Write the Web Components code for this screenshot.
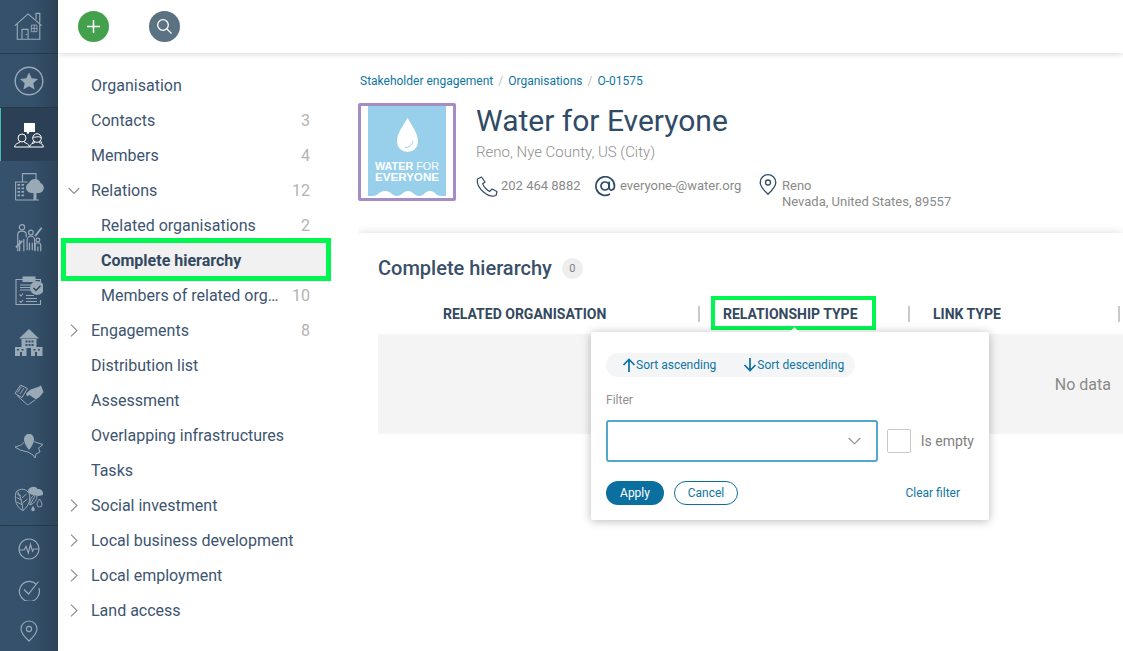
<!DOCTYPE html>
<html lang="en">
<head>
<meta charset="utf-8">
<title>Water for Everyone</title>
<style>
  html, body { margin: 0; height: 100%; overflow: hidden; background: #fff; }
  body { font-family: Roboto, "Liberation Sans", sans-serif; color: #3a5068; }
</style>
</head>
<body>

<app-shell>
  <side-rail slot="rail"></side-rail>
  <top-bar slot="top"></top-bar>
  <sub-nav slot="nav">
    <nav-item>Organisation</nav-item>
    <nav-item count="3">Contacts</nav-item>
    <nav-item count="4">Members</nav-item>
    <nav-item count="12" toggle="open">Relations</nav-item>
    <nav-item count="2" level="1">Related organisations</nav-item>
    <nav-item level="1" active>Complete hierarchy</nav-item>
    <nav-item count="10" level="1">Members of related org…</nav-item>
    <nav-item count="8" toggle="closed">Engagements</nav-item>
    <nav-item>Distribution list</nav-item>
    <nav-item>Assessment</nav-item>
    <nav-item>Overlapping infrastructures</nav-item>
    <nav-item>Tasks</nav-item>
    <nav-item toggle="closed">Social investment</nav-item>
    <nav-item toggle="closed">Local business development</nav-item>
    <nav-item toggle="closed">Local employment</nav-item>
    <nav-item toggle="closed">Land access</nav-item>
  </sub-nav>
  <div slot="main">
    <bread-crumbs></bread-crumbs>
    <org-header></org-header>
    <data-card heading="Complete hierarchy" total="0">
      <col-head width="322" pad="65">RELATED ORGANISATION</col-head>
      <col-head width="210" pad="23" marked>RELATIONSHIP TYPE</col-head>
      <col-head width="210" pad="23">LINK TYPE</col-head>
      <filter-pop slot="popup"></filter-pop>
    </data-card>
  </div>
</app-shell>

<script>
// Small helper so every element gets an open shadow root with its own styles
class BaseElement extends HTMLElement {
  constructor() {
    super();
    this._shadowRoot = this.attachShadow({ mode: 'open' });
  }
  connectedCallback() {
    this._shadowRoot.innerHTML = this._render();
  }
}

/* Page frame: rail on the left, bar on top, sub navigation and content below */
class AppShell extends BaseElement {
  _render() {
    return `
      <style>
        :host { display: grid; grid-template-columns: 58px 1fr; height: 651px; overflow: hidden; }
        .right { display: flex; flex-direction: column; min-width: 0; height: 651px; }
        .below { display: flex; flex: 1; min-height: 0; }
        .main { flex: 1; min-width: 0; overflow: hidden; }
      </style>
      <slot name="rail"></slot>
      <div class="right">
        <slot name="top"></slot>
        <div class="below">
          <slot name="nav"></slot>
          <div class="main"><slot name="main"></slot></div>
        </div>
      </div>`;
  }
}
customElements.define('app-shell', AppShell);

/* Dark icon rail */
const RAIL_ICONS = {
  home: `<svg width="30" height="30" viewBox="0 0 32 32"><path d="M1 14.500 15 2 29.500 14.500M3.500 12.500V29H27.500V12.500M23.500 8V1.500H27.500V12M8.500 29V18.500H15V29" fill="none" stroke="currentColor" stroke-width="1.200"/><path d="M18.500 14H24.500V21H18.500ZM18.500 17.500H24.500M21.500 14V21" fill="none" stroke="currentColor" stroke-width="1"/><circle cx="13" cy="24" r=".8" fill="currentColor"/></svg>`,
  star: `<svg width="30" height="30" viewBox="0 0 30 30"><circle cx="15" cy="15" r="13.800" fill="none" stroke="currentColor" stroke-width="1.400"/><path d="M15 6.500 17.700 12.300 24 13 19.300 17.300 20.600 23.500 15 20.300 9.400 23.500 10.700 17.300 6 13 12.300 12.300Z" fill="currentColor"/></svg>`,
  people: `<svg width="30" height="26" viewBox="0 0 30 26"><path d="M10 1H21V10H15.500L14 12.500 12.500 10H10Z" fill="#fff"/><g fill="none" stroke="#fff" stroke-width="1"><circle cx="8" cy="16" r="4"/><path d="M.5 25C1 22 3.500 21.500 6 20M10 20C12.500 21.500 15 22 15.500 25H.5"/><circle cx="23" cy="16" r="4.300"/><path d="M19 15C21 16 24 13.500 27 15.500M15.500 25C16 22 18.500 21.500 21 20.500M25 20.500C27 21.500 29 22 29.500 25H15.500M19.500 19 18.500 21M26.500 19 28 21"/></g></svg>`,
  org: `<svg width="29" height="28" viewBox="0 0 29 28"><g fill="none" stroke="currentColor" stroke-width="1.100"><path d="M.6 27V9H12.500M.6 27H24"/><path d="M7.500 9V.6H21V7"/></g><path d="M2.500 11h2.600v1.700h-2.600zM6.500 11h2.600v1.700h-2.600zM2.500 14.500h2.600v1.700h-2.600zM6.500 14.500h2.600v1.700h-2.600zM2.500 18h2.600v1.700h-2.600zM6.500 18h2.600v1.700h-2.600zM2.500 21.500h2.600v1.700h-2.600zM6.500 21.500h2.600v1.700h-2.600z" fill="currentColor"/><path d="M20 6C23 6 25 8 25.500 10 28 11 29.500 14 28.500 16.500 27.500 19.500 24.500 20.500 21.500 20V27H18.500V20C15 20.500 12 19 11.200 16 10.500 13 12 11 14 10 14.500 8 17 6 20 6Z" fill="currentColor"/></svg>`,
  family: `<svg width="30" height="30" viewBox="0 0 30 32"><g fill="none" stroke="currentColor" stroke-width="1.300"><circle cx="7.500" cy="3.500" r="2.800"/><path d="M3 29V11C3 8.500 5 7.500 7.500 7.500S12 8.500 12 11V14M5 29V17M9.500 16V29"/><circle cx="17" cy="9" r="2.500"/><path d="M13 28V17C13 14.500 15 13 17 13S21 14.500 21 17V28M15.500 20V28M18.500 20V28"/><circle cx="24.500" cy="17" r="2"/><path d="M21.500 29V23C21.500 21 23 20 24.500 20S27.500 21 27.500 23V29M24.500 24V29"/><path d="M1 25 8 18M21.500 13 28.500 4" stroke-width="2"/></g></svg>`,
  tasks: `<svg width="28" height="30" viewBox="0 0 28 30"><g fill="none" stroke="currentColor" stroke-width="1.100"><path d="M20 3.500H25.500V12M25.500 24V28.500H1V3.500H8"/><rect x="8" y="1" width="12" height="4.500" fill="currentColor"/><path d="M5 9H19M5 11.500H18M5 14H17" stroke-width="1.200"/><path d="M4.500 18.500 6 20 8 17.500M4.500 25 6 26.500 8 24M11 19.500H19M11 22.500H22M11 25.500H22"/></g><circle cx="22" cy="12" r="7" fill="currentColor"/><path d="M18.500 12 21 14.500 25.500 9.800" fill="none" stroke="#33495f" stroke-width="1.500"/></svg>`,
  campus: `<svg width="30" height="30" viewBox="0 0 30 30"><path d="M15 1 25 10.500H5Z" fill="currentColor"/><path d="M7.500 11H22.500V20H7.500Z" fill="currentColor"/><path d="M11.500 12.500h2v2h-2zM14.500 12.500h2v2h-2zM17.500 12.500h2v2h-2zM11.500 16h2v2h-2zM14.500 16h2v2h-2zM17.500 16h2v2h-2z" fill="#35506a"/><path d="M1 19H12.500V28H8V24H6V28H1ZM17 19H28.500V28H23V24H21V28H17Z" fill="currentColor"/><path d="M3 21h2v1.500h-2zM7.500 21h2v1.500h-2zM19.500 21h2v1.500h-2zM24 21h2v1.500h-2z" fill="#35506a"/></svg>`,
  shake: `<svg width="30" height="22" viewBox="0 0 30 22"><g fill="none" stroke="currentColor" stroke-width="1"><path d="M1 9.500 6.500 1 13.500 4.500 8 13.500Z"/><path d="M3.500 8.500 7.500 2.500M6 10 10 4"/><path d="M3 11.500 12.500 20C14 21 15.500 20.500 16 19.500L21 16"/></g><path d="M12 9.500 16.500 5.500 24 3 27 1.500 29.500 8 26 12.500 22 15.500 15.500 11 13 12.500Z" fill="currentColor"/></svg>`,
  map: `<svg width="30" height="30" viewBox="0 0 30 30"><path d="M9 10C10.500 12 6 13.500 1 15L6 18 14 20 19 23 21 26 22 22 26 20 24.500 16 29 12.500 24 11 20 9.500" fill="none" stroke="currentColor" stroke-width="1"/><path d="M15 18C12 14 10 11 10 7.500 10 4 12.200 2 15 2S20 4 20 7.500C20 11 18 14 15 18Z" fill="currentColor"/></svg>`,
  nature: `<svg width="30" height="30" viewBox="0 0 30 30"><path d="M14 6C17 1.500 22 2 23.500 5 27 4.500 29.500 7 29 10.500 27 12.500 22 12 19 11 16 10.500 14 9 14 6Z" fill="currentColor"/><g fill="none" stroke="currentColor" stroke-width="1"><path d="M9 26.500C3 24 0 17 2 8 7 3 13 5.500 15 9.500 17 15.500 14.500 22.500 9 26.500ZM9 26.500C8 19 7 13 3.500 7.500M8.500 21 3 18M8 16.500 2.500 13.500M7 12 3 10M8.500 19 13.500 15M8 14 12.500 10"/><path d="M16 21C15.500 16 17.500 11.500 22.500 10 24 14 21.500 19 16 21ZM16 21 21 12"/></g><path d="M25.500 15C27 17.500 28 19 28 20.500A2.500 2.500 0 0 1 23 20.500C23 19 24 17.500 25.500 15Z" fill="none" stroke="currentColor" stroke-width="1"/><path d="M19 22C20 23.500 20.800 24.500 20.800 25.500A1.800 1.800 0 0 1 17.200 25.500C17.200 24.500 18 23.500 19 22Z" fill="currentColor"/></svg>`,
  pulse: `<svg width="22" height="22" viewBox="0 0 22 22"><circle cx="11" cy="11" r="10" fill="none" stroke="currentColor" stroke-width="1.200"/><path d="M1.500 12H6L8 8.500 10.300 15 12.500 6.500 14.500 13 15.800 11H20.500" fill="none" stroke="currentColor" stroke-width="1.200"/></svg>`,
  check: `<svg width="22" height="22" viewBox="0 0 22 22"><path d="M18.300 5.200A10 10 0 1 0 20.800 9" fill="none" stroke="currentColor" stroke-width="1.200"/><path d="M6 10.500 10.500 15 20.500 2.500" fill="none" stroke="currentColor" stroke-width="1.200"/></svg>`,
  pin: `<svg width="18" height="22" viewBox="0 0 18 22"><path d="M9 21C4 16.500 1 13 1 9A8 8 0 0 1 17 9C17 13 14 16.500 9 21Z" fill="none" stroke="currentColor" stroke-width="1.100"/><circle cx="9" cy="9" r="2.600" fill="none" stroke="currentColor" stroke-width="1.100"/></svg>`
};

class SideRail extends BaseElement {
  _render() {
    const item = (name, cls) => `<div class="item ${cls || ''}">${RAIL_ICONS[name]}</div>`;
    return `
      <style>
        :host {
          display: flex; flex-direction: column; width: 58px; height: 651px; overflow: hidden;
          background: linear-gradient(90deg, #36516b 0%, #34506a 55%, #2d4459 100%);
          color: #9aa9b6;
        }
        .item { height: 52px; flex: none; display: flex; align-items: center; justify-content: center; }
        .item svg { display: block; }
        .top { height: 53px; border-bottom: 1px solid #26394b; box-sizing: content-box; }
        .active { height: 53px; background: #2b4055; box-shadow: inset 1px 0 0 #3ec0b4; color: #fff; }
        .low { height: 41px; }
        .sep { height: 1px; flex: none; background: #26394b; margin-bottom: 2px; }
      </style>
      ${item('home', 'top')}
      ${item('star', 'top')}
      ${item('people', 'active')}
      ${item('org')}
      ${item('family')}
      ${item('tasks')}
      ${item('campus')}
      ${item('shake')}
      ${item('map')}
      ${item('nature')}
      <div class="sep"></div>
      ${item('pulse', 'low')}
      ${item('check', 'low')}
      ${item('pin', 'low')}`;
  }
}
customElements.define('side-rail', SideRail);

/* White bar on top with the two round actions */
class TopBar extends BaseElement {
  _render() {
    return `
      <style>
        :host {
          display: flex; align-items: center; gap: 40px; flex: none; height: 53px;
          padding-left: 20px; box-sizing: border-box; background: #fff;
          box-shadow: 0 1px 6px rgba(0,0,0,.16); position: relative; z-index: 2;
        }
        .round { width: 31px; height: 31px; border-radius: 50%; display: flex; align-items: center; justify-content: center; }
        .add { background: #43a14b; }
        .find { background: #5a7282; }
      </style>
      <div class="round add"><svg width="15" height="15" viewBox="0 0 15 15"><path d="M7.500 1V14M1 7.500H14" stroke="#fff" stroke-width="1.500"/></svg></div>
      <div class="round find"><svg width="17" height="17" viewBox="0 0 17 17"><circle cx="7" cy="7" r="5.300" fill="none" stroke="#fff" stroke-width="1.300"/><path d="M11 11 15.500 15.500" stroke="#fff" stroke-width="1.300"/></svg></div>`;
  }
}
customElements.define('top-bar', TopBar);

/* Second level navigation */
class SubNav extends BaseElement {
  _render() {
    return `
      <style>
        :host { display: block; flex: none; width: 300px; padding-top: 15px; box-sizing: border-box; }
      </style>
      <slot></slot>`;
  }
}
customElements.define('sub-nav', SubNav);

class NavItem extends BaseElement {
  _render() {
    const level = this.getAttribute('level') === '1' ? 1 : 0;
    const toggle = this.getAttribute('toggle');
    const count = this.getAttribute('count');
    const active = this.hasAttribute('active');
    let chevron = '';
    if (toggle === 'open') {
      chevron = `<svg class="chev" style="left:10px;top:14px" width="12" height="8" viewBox="0 0 12 8"><path d="M.7 1 6 6.500 11.300 1" fill="none" stroke="#8b8b8b" stroke-width="1.100"/></svg>`;
    } else if (toggle === 'closed') {
      chevron = `<svg class="chev" style="left:12px;top:11px" width="8" height="13" viewBox="0 0 8 13"><path d="M1 .7 7 6.500 1 12.300" fill="none" stroke="#8b8b8b" stroke-width="1.100"/></svg>`;
    }
    return `
      <style>
        :host {
          display: flex; align-items: center; position: relative; height: 35px;
          padding: 0 48px 0 ${level ? 43 : 33}px; box-sizing: border-box; font-size: 16px; color: #3d5570;
        }
        :host([active]) {
          margin: -5px 27px -3px 3px; height: 43px; padding: 2px 0 0 35px;
          border: 5px solid #00f752; background: #f1f1f1; font-weight: 700; color: #33495f;
        }
        .label { flex: 1; min-width: 0; white-space: nowrap; }
        .count { flex: none; margin-left: 13px; color: #b3b3b3; }
        .chev { position: absolute; display: block; }
      </style>
      ${chevron}
      <span class="label"><slot></slot></span>
      ${count && !active ? `<span class="count">${count}</span>` : ''}`;
  }
}
customElements.define('nav-item', NavItem);

/* Breadcrumb line */
class BreadCrumbs extends BaseElement {
  _render() {
    return `
      <style>
        :host {
          display: flex; gap: 5px; height: 50px; padding: 20px 0 0 2px; box-sizing: border-box;
          font-size: 12px; line-height: 16px; color: #0f76a3; white-space: nowrap;
        }
        i { font-style: normal; color: #c2c2c2; }
      </style>
      <span>Stakeholder engagement</span><i>/</i><span>Organisations</span><i>/</i><span>O-01575</span>`;
  }
}
customElements.define('bread-crumbs', BreadCrumbs);

/* Logo, name and contact details of the organisation */
class OrgHeader extends BaseElement {
  _render() {
    return `
      <style>
        :host { display: flex; gap: 20px; height: 130px; font-size: 13px; color: #8a8a8a; }
        .logo { flex: none; width: 98px; height: 98px; border: 3px solid #a58cc5; border-radius: 2px; box-sizing: border-box; background: #fff; }
        .logo svg { display: block; }
        .logo text { font-family: "Liberation Sans", Arial, sans-serif; font-weight: 700; fill: #fff; }
        .logo tspan { font-weight: 400; }
        h1 { margin: 0; font-size: 30px; line-height: 36px; font-weight: 400; color: #2f4b66; white-space: nowrap; }
        .where { margin-top: 3px; font-size: 15px; line-height: 20px; font-weight: 300; color: #8f8f8f; }
        .contact { display: flex; margin-top: 14px; white-space: nowrap; }
        .bit { display: flex; align-items: flex-start; line-height: 16px; }
        .bit svg { flex: none; display: block; }
        .phone { width: 119px; gap: 3px; padding-top: 2px; }
        .mail { width: 164px; gap: 4px; padding-top: 2px; }
        .place { gap: 5px; padding-top: 0; line-height: 16px; }
        .place div { padding-top: 2px; }
      </style>
      <div class="logo">
        <svg width="92" height="92" viewBox="0 0 92 92">
          <path d="M7 0H85V90H80C75 90 74 85 69 85 64 85 63 90 58 90 53 90 52 85 47 85 42 85 41 90 36 90 31 90 30 85 24 85 18 85 17 90 12 90H7Z" fill="#98d0ec"/>
          <path d="M46.500 12C51 20 57 27 57 35.500A10.500 10.500 0 0 1 36 35.500C36 27 42 20 46.500 12Z" fill="#fff"/>
          <path d="M44 41.500C48 41.500 51 39 52 35" fill="none" stroke="#98d0ec" stroke-width="1"/>
          <text x="14" y="64" font-size="11" textLength="64" lengthAdjust="spacingAndGlyphs">WATER <tspan>FOR</tspan></text>
          <text x="14" y="74.500" font-size="11" textLength="64" lengthAdjust="spacingAndGlyphs">EVERYONE</text>
        </svg>
      </div>
      <div>
        <h1>Water for Everyone</h1>
        <div class="where">Reno, Nye County, US (City)</div>
        <div class="contact">
          <div class="bit phone">
            <svg width="22" height="21" viewBox="0 0 22 21" style="margin-top:-2px"><path d="M5.500 1 1.500 3C.5 8 4 13 7.500 16S15.500 21 20 19.500L21 15.500 16 13 13.800 15.300C11 14.500 7.500 10.500 6.700 7.800L9 6Z" fill="none" stroke="#2f4b66" stroke-width="1.200" stroke-linejoin="round"/></svg>
            <span>202 464 8882</span>
          </div>
          <div class="bit mail">
            <svg width="21" height="21" viewBox="0 0 21 21" style="margin-top:-2px"><circle cx="10" cy="10" r="4" fill="none" stroke="#2f4b66" stroke-width="1.700"/><path d="M14.200 5.500V12C14.200 15 19.500 15 19.500 10A9.300 9.300 0 1 0 15 18" fill="none" stroke="#2f4b66" stroke-width="1.700"/></svg>
            <span>everyone-@water.org</span>
          </div>
          <div class="bit place">
            <svg width="18" height="21" viewBox="0 0 18 21" style="margin-top:-2px"><path d="M9 20.300C4 15.500 1.200 12.500 1.200 8.500A7.800 7.800 0 0 1 16.800 8.500C16.800 12.500 14 15.500 9 20.300Z" fill="none" stroke="#2f4b66" stroke-width="1.300"/><circle cx="9" cy="8.500" r="2.500" fill="none" stroke="#2f4b66" stroke-width="1.300"/></svg>
            <div>Reno<br>Nevada, United States, 89557</div>
          </div>
        </div>
      </div>`;
  }
}
customElements.define('org-header', OrgHeader);

/* White card with heading, column heads and the empty table */
class DataCard extends BaseElement {
  _render() {
    return `
      <style>
        :host {
          display: block; position: relative; height: 500px; padding: 20px 0 0 20px; box-sizing: border-box;
          background: #fff; border-radius: 3px 0 0 3px; box-shadow: 0 0 10px rgba(0,0,0,.14);
        }
        .title { display: flex; align-items: center; gap: 10px; height: 30px; }
        h2 { margin: 0; font-size: 20px; font-weight: 500; color: #3a5068; white-space: nowrap; }
        .badge {
          width: 21px; height: 21px; border-radius: 50%; background: #eee; color: #808080;
          font-size: 11px; display: flex; align-items: center; justify-content: center;
        }
        .cols { display: flex; align-items: flex-start; height: 28px; margin-top: 14px; padding-top: 9px; }
        .empty {
          display: flex; align-items: center; justify-content: flex-end; height: 100px; padding-right: 12px;
          background: #f4f4f4; color: #8a8a8a; font-size: 16px;
        }
      </style>
      <div class="title"><h2>${this.getAttribute('heading')}</h2><span class="badge">${this.getAttribute('total')}</span></div>
      <div class="cols"><slot></slot></div>
      <div class="empty">No data</div>
      <slot name="popup"></slot>`;
  }
}
customElements.define('data-card', DataCard);

class ColHead extends BaseElement {
  _render() {
    return `
      <style>
        :host {
          display: flex; align-items: center; flex: none; position: relative; height: 16px;
          width: ${this.getAttribute('width')}px; padding-left: ${this.getAttribute('pad')}px;
          box-sizing: border-box; border-right: 2px solid #c9c9c9;
          font-size: 14px; font-weight: 700; color: #33495f; white-space: nowrap;
        }
        .mark { position: absolute; left: 11px; top: -10px; width: 165px; height: 34px; box-sizing: border-box; border: 4px solid #00f752; }
      </style>
      <slot></slot>
      ${this.hasAttribute('marked') ? '<span class="mark"></span>' : ''}`;
  }
}
customElements.define('col-head', ColHead);

/* Filter popup that hangs under the marked column */
class FilterPop extends BaseElement {
  _render() {
    return `
      <style>
        :host {
          display: block; position: absolute; left: 233px; top: 99px; width: 398px; height: 188px;
          padding: 21px 15px 0; box-sizing: border-box; background: #fff; border-radius: 2px;
          box-shadow: 0 1px 10px rgba(0,0,0,.28); font-size: 12px; color: #0f76a3; z-index: 3;
        }
        .caret {
          position: absolute; left: 199px; top: -3px; width: 9px; height: 9px;
          background: #fff; transform: rotate(45deg);
        }
        .sorts {
          display: inline-flex; align-items: center; height: 24px; padding: 0 11px 0 16px;
          background: #f4f5f6; border-radius: 12px; white-space: nowrap;
        }
        .sorts span { display: flex; align-items: center; }
        .sorts span + span { margin-left: 27px; }
        .label { margin-top: 15px; line-height: 16px; color: #8f8f8f; }
        .row { display: flex; align-items: center; margin-top: 12px; }
        .select {
          width: 272px; height: 42px; box-sizing: border-box; border: 2px solid #52a7cc; border-radius: 3px;
          display: flex; align-items: center; justify-content: flex-end; padding-right: 15px;
        }
        .box { width: 24px; height: 24px; margin-left: 9px; box-sizing: border-box; border: 1px solid #c8c8c8; border-radius: 2px; }
        .empty { margin-left: 10px; font-size: 14px; color: #808080; white-space: nowrap; }
        .actions { display: flex; align-items: center; margin-top: 19px; }
        .btn { height: 24px; box-sizing: border-box; border-radius: 12px; display: flex; align-items: center; justify-content: center; }
        .apply { width: 58px; background: #0b6f9f; color: #fff; }
        .cancel { width: 64px; margin-left: 10px; border: 1px solid #0b6f9f; }
        .clear { margin-left: auto; margin-right: 14px; }
      </style>
      <div class="caret"></div>
      <div class="sorts">
        <span><svg width="14" height="14" viewBox="0 0 14 14"><path d="M7 14V1.500M1.500 7 7 1.500 12.500 7" fill="none" stroke="#0b6f9f" stroke-width="1.700"/></svg>Sort ascending</span>
        <span><svg width="14" height="14" viewBox="0 0 14 14"><path d="M7 0V12.500M1.500 7 7 12.500 12.500 7" fill="none" stroke="#0b6f9f" stroke-width="1.700"/></svg>Sort descending</span>
      </div>
      <div class="label">Filter</div>
      <div class="row">
        <div class="select"><svg width="13" height="8" viewBox="0 0 13 8"><path d="M.7 1 6.500 6.800 12.300 1" fill="none" stroke="#8b8b8b" stroke-width="1.100"/></svg></div>
        <div class="box"></div>
        <span class="empty">Is empty</span>
      </div>
      <div class="actions">
        <div class="btn apply">Apply</div>
        <div class="btn cancel">Cancel</div>
        <div class="clear">Clear filter</div>
      </div>`;
  }
}
customElements.define('filter-pop', FilterPop);
</script>
</body>
</html>
